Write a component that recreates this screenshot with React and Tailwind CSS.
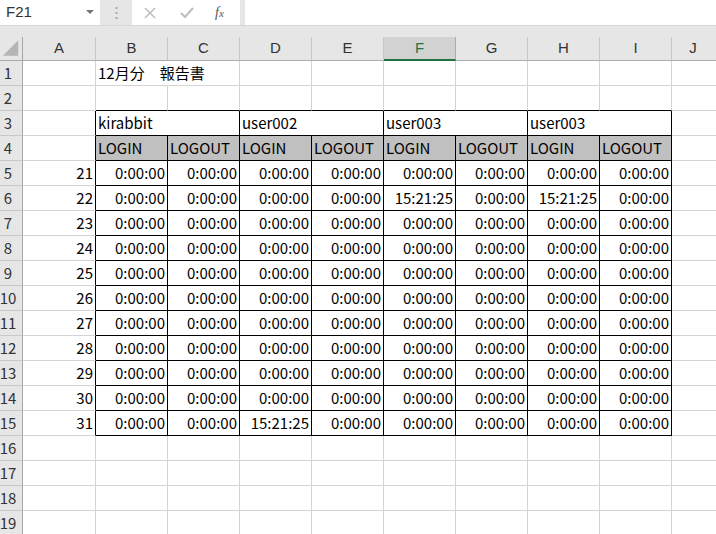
import React from "react";

const letters = ["A", "B", "C", "D", "E", "F", "G", "H", "I"];
const users = ["kirabbit", "user002", "user003", "user003"];

// times per row: [B, C, D, E, F, G, H, I]
const Z = "0:00:00";
const T = "15:21:25";
const times = Array.from({ length: 11 }, (_, i) => {
  const day = 21 + i;
  const row = [Z, Z, Z, Z, Z, Z, Z, Z];
  if (day === 22) {
    row[4] = T;
    row[6] = T;
  }
  if (day === 31) row[2] = T;
  return { day, row };
});

function Cell({ wide, first, black, blackB, gray, right, children }) {
  return (
    <div
      className={[
        "h-[25px] shrink-0 border-r border-b flex items-center px-[2px] whitespace-nowrap text-[15px] text-black",
        wide ? "w-[144px]" : first ? "w-[73px]" : "w-[72px]",
        black ? "border-r-black" : "border-r-[#d4d4d4]",
        blackB ? "border-b-black" : "border-b-[#d4d4d4]",
        gray ? "bg-[#c0c0c0]" : "",
        right ? "justify-end" : "justify-start",
      ].join(" ")}
    >
      {children}
    </div>
  );
}

function RowHead({ n }) {
  return (
    <div className="h-[25px] w-[23px] shrink-0 bg-[#e6e6e6] border-r border-r-[#a6a6a6] border-b border-b-[#c8c8c8] flex items-center justify-center pr-[6px] text-[15px] text-[#333]">
      {n}
    </div>
  );
}

function Tail() {
  return <div className="h-[25px] flex-1 border-b border-b-[#d4d4d4]" />;
}

export default function App() {
  const rows = [];

  // row 1
  rows.push(
    <div key="r1" className="flex">
      <RowHead n={1} />
      <Cell first />
      <Cell wide>12月分　報告書</Cell>
      <Cell />
      <Cell />
      <Cell />
      <Cell />
      <Cell />
      <Cell />
      <Tail />
    </div>
  );

  // row 2 (top edge of table)
  rows.push(
    <div key="r2" className="flex">
      <RowHead n={2} />
      <Cell first />
      {letters.slice(1).map((l) => (
        <Cell key={l} blackB />
      ))}
      <Tail />
    </div>
  );

  // row 3 user names
  rows.push(
    <div key="r3" className="flex">
      <RowHead n={3} />
      <Cell first black />
      {users.map((u, i) => (
        <Cell key={i} wide black blackB>
          {u}
        </Cell>
      ))}
      <Tail />
    </div>
  );

  // row 4 login / logout
  rows.push(
    <div key="r4" className="flex">
      <RowHead n={4} />
      <Cell first black />
      {users.map((u, i) => (
        <React.Fragment key={i}>
          <Cell black blackB gray>LOGIN</Cell>
          <Cell black blackB gray>LOGOUT</Cell>
        </React.Fragment>
      ))}
      <Tail />
    </div>
  );

  // rows 5-15 data
  times.forEach((t, i) => {
    rows.push(
      <div key={"d" + i} className="flex">
        <RowHead n={5 + i} />
        <Cell first black right>
          {t.day}
        </Cell>
        {t.row.map((v, j) => (
          <Cell key={j} black blackB right>
            {v}
          </Cell>
        ))}
        <Tail />
      </div>
    );
  });

  // rows 16-19
  [16, 17, 18, 19].forEach((n) => {
    rows.push(
      <div key={"e" + n} className="flex">
        <RowHead n={n} />
        <Cell first />
        {letters.slice(1).map((l) => (
          <Cell key={l} />
        ))}
        <Tail />
      </div>
    );
  });

  return (
    <div className="w-[716px] h-[534px] overflow-hidden bg-white font-['Noto_Sans_CJK_JP','Noto_Sans',sans-serif]">
      {/* Formula bar */}
      <div className="h-[37px] bg-[#e6e6e6]">
        <div className="h-[26px] flex border-b border-b-[#d6d6d6]">
          <div className="w-[100px] bg-white flex items-center justify-between pl-[6px] pr-[6px]">
            <span className="text-[15px] text-[#333] font-['Liberation_Sans',sans-serif]">F21</span>
            <svg width="8" height="5" viewBox="0 0 8 5">
              <polygon points="0,0 8,0 4,4" fill="#777" />
            </svg>
          </div>
          <div className="w-[32px] flex items-center justify-center">
            <svg width="3" height="12" viewBox="0 0 3 12">
              <rect x="0.5" y="0" width="2" height="2" fill="#a8a8a8" />
              <rect x="0.5" y="5" width="2" height="2" fill="#a8a8a8" />
              <rect x="0.5" y="10" width="2" height="2" fill="#a8a8a8" />
            </svg>
          </div>
          <div className="w-[108px] bg-white flex items-center">
            <svg className="ml-[12px]" width="12" height="12" viewBox="0 0 12 12">
              <path d="M1 1 L11 11 M11 1 L1 11" stroke="#bdbdbd" strokeWidth="1.5" />
            </svg>
            <svg className="ml-[24px]" width="14" height="12" viewBox="0 0 14 12">
              <path d="M1 6 L5 10 L13 1" stroke="#bdbdbd" strokeWidth="2" fill="none" />
            </svg>
            <span className="ml-[21px] text-[14px] italic text-[#555] font-['Liberation_Serif',serif] leading-none">
              f<span className="text-[11px]">x</span>
            </span>
          </div>
          <div className="w-[5px]" />
          <div className="flex-1 bg-white" />
        </div>
      </div>

      {/* Column headers */}
      <div className="flex h-[24px] bg-[#e6e6e6]">
        <div className="w-[23px] shrink-0 border-r border-r-[#a6a6a6] border-b border-b-[#ababab] flex items-end justify-center">
          <svg width="23" height="23" viewBox="0 0 23 23">
            <polygon points="19,3 19,19 3,19" fill="#b5b5b5" />
          </svg>
        </div>
        {letters.map((l, i) =>
          l === "F" ? (
            <div
              key={l}
              className="w-[72px] shrink-0 bg-[#d2d2d2] border-r border-r-[#ababab] border-b-2 border-b-[#217346] flex items-center justify-center text-[15px] text-[#217346] font-['Liberation_Sans',sans-serif]"
            >
              {l}
            </div>
          ) : (
            <div
              key={l}
              className={
                (i === 0 ? "w-[73px] " : "w-[72px] ") +
                "shrink-0 border-r border-r-[#c6c6c6] border-b border-b-[#ababab] flex items-center justify-center text-[15px] text-[#333] font-['Liberation_Sans',sans-serif]"
              }
            >
              {l}
            </div>
          )
        )}
        <div className="flex-1 border-b border-b-[#ababab] flex items-center justify-center pr-[2px] text-[15px] text-[#333] font-['Liberation_Sans',sans-serif]">
          J
        </div>
      </div>

      {rows}
    </div>
  );
}
